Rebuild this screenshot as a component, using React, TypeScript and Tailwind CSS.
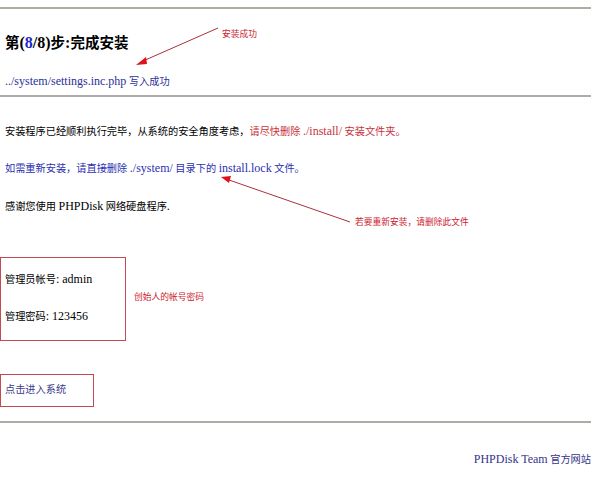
import type { ReactNode } from "react";

// latin runs are set a little larger than the CJK text, like the original page
function L({ children }: { children: ReactNode }) {
  return <span className="text-[12px] leading-none">{children}</span>;
}

export default function App() {
  const serif = { fontFamily: '"Liberation Serif", "Noto Sans CJK SC", serif' };
  const note = { fontFamily: '"Noto Sans CJK SC", sans-serif' };

  return (
    <div className="relative h-[480px] w-[600px] overflow-hidden bg-white text-[10.2px] text-black" style={serif}>
      <div className="mt-[7px] h-[2px] w-[591px] bg-[#adada5]" />

      <h1 className="mt-[24px] h-[20px] pl-[5px] text-[14.5px] font-bold leading-[20px]">
        第<span className="text-[16px] leading-none">(<span className="text-[#1b24c8]">8</span>/8)</span>步
        <span className="text-[16px] leading-none">:</span>完成安装
      </h1>

      <p className="mt-[21px] h-[16px] pl-[5px] leading-[16px] text-[#2b2f98]">
        <L>../system/settings.inc.php</L> 写入成功
      </p>

      <div className="mt-[5px] h-[2px] w-[591px] bg-[#adada5]" />

      <p className="mt-[27px] h-[16px] pl-[5px] leading-[16px]">
        安装程序已经顺利执行完毕，从系统的安全角度考虑，
        <span className="text-[#c8323c]">
          请尽快删除 <L>./install/</L> 安装文件夹。
        </span>
      </p>

      <p className="mt-[21px] h-[16px] pl-[5px] leading-[16px] text-[#2b2fb0]">
        如需重新安装，请直接删除 <L>./system/</L> 目录下的 <L>install.lock</L> 文件。
      </p>

      <p className="mt-[22px] h-[16px] pl-[5px] leading-[16px]">
        感谢您使用 <L>PHPDisk</L> 网络硬盘程序<L>.</L>
      </p>

      <div className="mt-[42px] flex h-[84px] w-[126px] flex-col border border-[#c24a52] pl-[4px] pt-[14px]">
        <p className="h-[16px] leading-[16px]">
          管理员帐号<L>: admin</L>
        </p>
        <p className="mt-[21px] h-[16px] leading-[16px]">
          管理密码<L>: 123456</L>
        </p>
      </div>

      <div className="mt-[33px] flex h-[33px] w-[94px] items-center border border-[#c24a52] pb-[2px] pl-[4px] text-[#3a3a8a]">
        点击进入系统
      </div>

      <div className="mt-[14px] h-[2px] w-[591px] bg-[#adada5]" />

      <p className="mt-[29px] h-[16px] w-[591px] text-right leading-[16px] text-[#34348a]">
        <L>PHPDisk Team</L> 官方网站
      </p>

      {/* annotations drawn over the page */}
      <svg className="pointer-events-none absolute left-0 top-0" width="600" height="480">
        <line x1="218" y1="28" x2="143" y2="61" stroke="#a8323e" strokeWidth="1" />
        <polygon points="136,65 146,57 147,64" fill="#e0101c" />
        <line x1="350" y1="222" x2="229" y2="180" stroke="#a8323e" strokeWidth="1" />
        <polygon points="221,177 231,176 229,183" fill="#e0101c" />
      </svg>
      <span className="absolute left-[222px] top-[28px] text-[8.75px] leading-[12px] text-[#cc2230]" style={note}>
        安装成功
      </span>
      <span className="absolute left-[355px] top-[216px] text-[8.75px] leading-[12px] text-[#cc2230]" style={note}>
        若要重新安装，请删除此文件
      </span>
      <span className="absolute left-[134px] top-[291px] text-[8.75px] leading-[12px] text-[#cc2230]" style={note}>
        创始人的帐号密码
      </span>
    </div>
  );
}
